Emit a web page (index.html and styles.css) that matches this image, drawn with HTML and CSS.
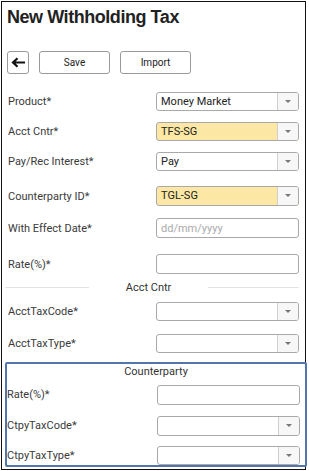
FILE: index.html
```html
<!DOCTYPE html>
<html lang="en">
<head>
    <meta charset="UTF-8">
    <title>New Withholding Tax</title>
    <link rel="stylesheet" href="styles.css">
</head>
<body>

<div class="frame">
    <!-- header -->
    <h1 class="page-title">New Withholding Tax</h1>

    <div class="toolbar">
        <button class="btn btn-back" type="button">
            <svg width="15" height="11" viewBox="0 0 15 11">
                <path d="M14 5.5H2.5M6.5 1.2L2 5.5l4.5 4.3" fill="none" stroke="#111" stroke-width="2.2"/>
            </svg>
        </button>
        <button class="btn btn-text" type="button">Save</button>
        <button class="btn btn-text" type="button">Import</button>
    </div>

    <!-- main fields -->
    <div class="form">
        <div class="row">
            <label>Product*</label>
            <div class="select"><span class="value">Money Market</span><span class="caret"></span></div>
        </div>
        <div class="row">
            <label>Acct Cntr*</label>
            <div class="select required"><span class="value">TFS-SG</span><span class="caret"></span></div>
        </div>
        <div class="row">
            <label>Pay/Rec Interest*</label>
            <div class="select"><span class="value">Pay</span><span class="caret"></span></div>
        </div>
        <div class="row row-spaced">
            <label>Counterparty ID*</label>
            <div class="select required tall"><span class="value">TGL-SG</span><span class="caret"></span></div>
        </div>
        <div class="row row-date">
            <label>With Effect Date*</label>
            <input class="text-input tall" type="text" placeholder="dd/mm/yyyy">
        </div>
        <div class="row row-spaced-lg">
            <label>Rate(%)*</label>
            <input class="text-input tall" type="text">
        </div>

        <div class="divider"><span>Acct Cntr</span></div>

        <div class="row row-tight">
            <label>AcctTaxCode*</label>
            <div class="select"><span class="value"></span><span class="caret"></span></div>
        </div>
        <div class="row row-wide">
            <label>AcctTaxType*</label>
            <div class="select"><span class="value"></span><span class="caret"></span></div>
        </div>
    </div>

    <!-- counterparty group -->
    <div class="group">
        <div class="group-title">Counterparty</div>
        <div class="row row-group">
            <label>Rate(%)*</label>
            <input class="text-input tall" type="text">
        </div>
        <div class="row row-group">
            <label>CtpyTaxCode*</label>
            <div class="select tall"><span class="value"></span><span class="caret"></span></div>
        </div>
        <div class="row row-group row-last">
            <label>CtpyTaxType*</label>
            <div class="select"><span class="value"></span><span class="caret"></span></div>
        </div>
    </div>
</div>

</body>
</html>
```

FILE: styles.css
```css
:root {
    --text-color: #222;
    --label-color: #3a3a3a;
    --border-color: #a9a9a9;
    --required-bg: #fce8a4;
    --group-border: #5276ab;
}

body {
    margin: 0;
    background: #fff;
    font-family: Roboto, "Liberation Sans", Arial, sans-serif;
}

/* outer frame */
.frame {
    width: 303px;
    height: 467px;
    margin: 1px 0 0 1px;
    border: 1px solid #111;
}

.page-title {
    margin: 0;
    padding: 4px 0 0 5px;
    height: 28px;
    font-family: "Liberation Sans", Arial, sans-serif;
    font-size: 18px;
    font-weight: bold;
    line-height: 23px;
    color: var(--text-color);
    letter-spacing: -0.45px;
}

.toolbar {
    display: flex;
    gap: 10px;
    padding: 17px 0 0 5px;
    height: 23px;
}

.btn {
    height: 23px;
    padding: 0;
    background: #fff;
    border: 1px solid #9a9a9a;
    border-radius: 3px;
    font-family: Roboto, "Liberation Sans", Arial, sans-serif;
    font-size: 10px;
    color: #222;
    display: flex;
    align-items: center;
    justify-content: center;
}

.btn-back {
    width: 22px;
}

.btn-text {
    width: 71px;
}

.form {
    padding: 12px 6px 0 6px;
}

.row {
    display: flex;
    align-items: center;
    height: 30px;
}

.row label {
    flex: 1;
    font-size: 11px;
    color: var(--label-color);
}

.row-spaced {
    margin-top: 5px;
}

.row-date {
    margin-top: 2px;
}

.row-spaced-lg {
    margin-top: 6px;
}

.row-tight {
    margin-top: 2px;
}

.row-wide {
    height: 32px;
    padding-top: 1px;
}

.select {
    width: 143px;
    height: 19px;
    box-sizing: border-box;
    border: 1px solid var(--border-color);
    border-radius: 3px;
    display: flex;
    background: #fff;
    overflow: hidden;
}

.select.tall,
.text-input.tall {
    height: 20px;
}

.select.required {
    background: var(--required-bg);
}

.select .value {
    flex: 1;
    padding-left: 4px;
    font-size: 11px;
    line-height: 17px;
    color: var(--text-color);
}

.select .caret {
    width: 20px;
    border-left: 1px solid #cfcfcf;
    background: #f7f7f7;
    position: relative;
}

.select .caret::after {
    content: "";
    position: absolute;
    left: 7px;
    top: 7px;
    border-left: 3px solid transparent;
    border-right: 3px solid transparent;
    border-top: 3px solid #777;
}

.text-input {
    width: 143px;
    height: 20px;
    box-sizing: border-box;
    border: 1px solid var(--border-color);
    border-radius: 3px;
    padding: 0 4px;
    font-family: Roboto, "Liberation Sans", Arial, sans-serif;
    font-size: 11px;
    color: var(--text-color);
}

.text-input::placeholder {
    color: #aaa;
}

/* section divider */
.divider {
    display: flex;
    align-items: center;
    height: 14px;
    margin: 1px 0 0 -3px;
    font-size: 11px;
    color: #333;
}

.divider::before,
.divider::after {
    content: "";
    height: 1px;
    background: #e2e2e2;
}

.divider::before {
    width: 84px;
}

.divider::after {
    flex: 1;
}

.divider span {
    flex: 0 0 119px;
    text-align: center;
}

/* counterparty group */
.group {
    margin: 3px 0 0 3px;
    width: 298px;
    height: 101px;
    border: 2px solid var(--group-border);
    border-radius: 2px;
}

.group-title {
    text-align: center;
    font-size: 11px;
    color: #333;
    height: 14px;
    line-height: 14px;
    margin-top: 1px;
}

.row-group {
    height: 31px;
    padding-right: 5px;
}

.row-last {
    height: 24px;
    align-items: flex-end;
}

.row-last label {
    align-self: center;
    padding-top: 4px;
}
```
